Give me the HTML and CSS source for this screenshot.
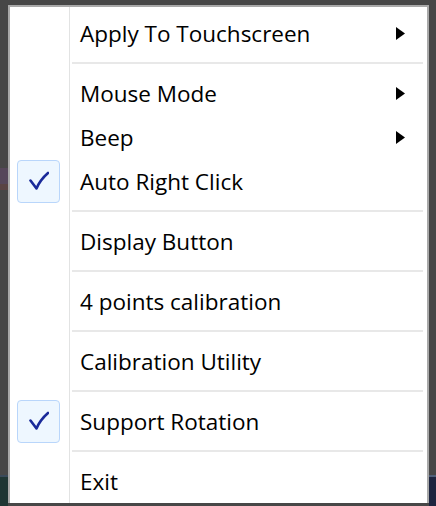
FILE: index.html
```html
<!DOCTYPE html>
<html>
<head>
<meta charset="utf-8">
<link rel="stylesheet" href="styles.css">
</head>
<body>
<div class="menu">
  <div class="item"><span class="icon"></span><span class="label">Apply To Touchscreen</span><svg class="arrow" width="9" height="13" viewBox="0 0 9 13"><path d="M0 0 L9 6.5 L0 13 Z" fill="#000"/></svg></div>
  <div class="sep"></div>
  <div class="item"><span class="icon"></span><span class="label">Mouse Mode</span><svg class="arrow" width="9" height="13" viewBox="0 0 9 13"><path d="M0 0 L9 6.5 L0 13 Z" fill="#000"/></svg></div>
  <div class="item"><span class="icon"></span><span class="label">Beep</span><svg class="arrow" width="9" height="13" viewBox="0 0 9 13"><path d="M0 0 L9 6.5 L0 13 Z" fill="#000"/></svg></div>
  <div class="item"><span class="icon"><span class="check"><svg width="20" height="20" viewBox="0 0 20 20"><path d="M1.5 9.5 L7.5 17.5 Q11 9 19 2" fill="none" stroke="#1a2a9a" stroke-width="2.6" stroke-linejoin="round" stroke-linecap="round"/></svg></span></span><span class="label">Auto Right Click</span></div>
  <div class="sep"></div>
  <div class="item"><span class="icon"></span><span class="label">Display Button</span></div>
  <div class="sep"></div>
  <div class="item"><span class="icon"></span><span class="label">4 points calibration</span></div>
  <div class="sep"></div>
  <div class="item"><span class="icon"></span><span class="label">Calibration Utility</span></div>
  <div class="sep"></div>
  <div class="item"><span class="icon"><span class="check"><svg width="20" height="20" viewBox="0 0 20 20"><path d="M1.5 9.5 L7.5 17.5 Q11 9 19 2" fill="none" stroke="#1a2a9a" stroke-width="2.6" stroke-linejoin="round" stroke-linecap="round"/></svg></span></span><span class="label">Support Rotation</span></div>
  <div class="sep"></div>
  <div class="item"><span class="icon"></span><span class="label">Exit</span></div>
</div>
</body>
</html>
```
FILE: styles.css
```css
html, body {
  margin: 0;
  height: 100%;
}
body {
  background:
    linear-gradient(180deg, transparent 168px, #56475a 168px, #56475a 184px, #5a4444 184px, #5a4444 190px, transparent 190px, transparent 475px, #3a4a5a 475px, #3a4a5a 477px, #1f3634 477px) left top / 8px 100% no-repeat,
    linear-gradient(180deg, transparent 475px, #50607a 475px, #50607a 477px, #1e2540 477px) right top / 7px 100% no-repeat,
    #474747;
  padding: 5px 0 0 8px;
  box-sizing: border-box;
  overflow: hidden;
  font-family: "Open Sans", "Noto Sans", sans-serif;
}
.menu {
  width: 421px;
  box-sizing: border-box;
  border: 2px solid #a9a9a9;
  border-bottom: none;
  padding-top: 4px;
  background: linear-gradient(90deg, #fff 59px, #e2e3e3 59px, #e2e3e3 60px, #fff 60px);
}
.item {
  height: 44px;
  display: flex;
  align-items: center;
}
.icon {
  width: 60px;
  height: 44px;
  flex: none;
  display: flex;
  align-items: center;
}
.check {
  margin-left: 7px;
  width: 43px;
  height: 43px;
  box-sizing: border-box;
  border: 1.5px solid #b9d6fb;
  border-radius: 4px;
  background: #eef7ff;
  display: flex;
  align-items: center;
  justify-content: center;
}
.label {
  flex: 1;
  padding-left: 10px;
  font-size: 22.5px;
  color: #000;
  white-space: nowrap;
}
.arrow {
  flex: none;
  margin-right: 22px;
}
.sep {
  height: 16px;
  margin: 0 4px 0 62px;
  background: linear-gradient(180deg, transparent 7px, #e8e8e8 7px, #e8e8e8 9px, transparent 9px);
}
```
